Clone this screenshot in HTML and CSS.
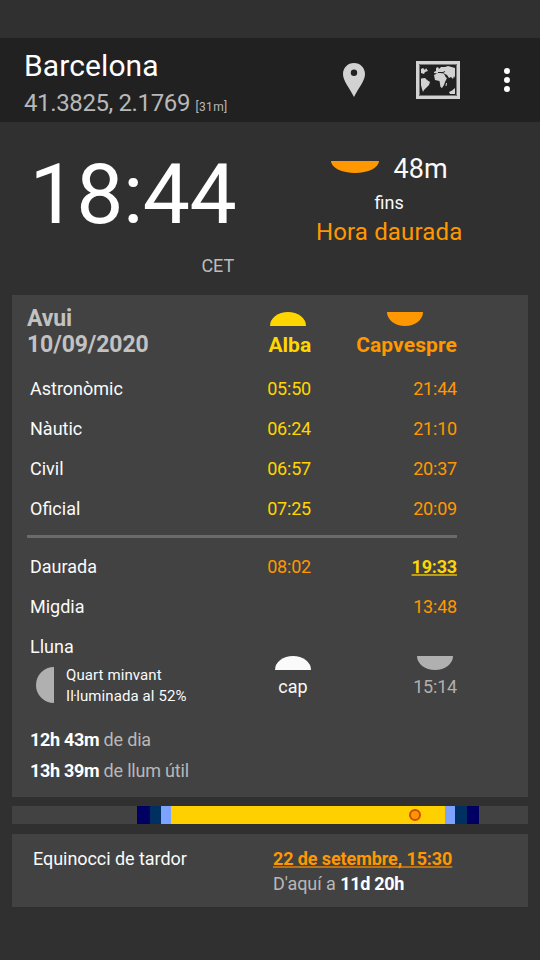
FILE: index.html
```html
<!DOCTYPE html>
<html lang="ca">
<head>
<meta charset="utf-8">
<title>Barcelona</title>
<link rel="stylesheet" href="styles.css">
</head>
<body>
<header class="bar">
  <div class="place">
    <div class="city">Barcelona</div>
    <div class="coords">41.3825, 2.1769 <small>[31m]</small></div>
  </div>
  <svg class="pin" width="22" height="34" viewBox="0 0 22 34"><path fill="#d2d2d2" fill-rule="evenodd" d="M11 0C4.800 0 0 4.800 0 11C0 18 6.500 25 11 34C15.500 25 22 18 22 11C22 4.800 17.200 0 11 0ZM11 6.500a3.200 3.200 0 1 1 0 6.400a3.200 3.200 0 1 1 0-6.400Z"/></svg>
  <svg class="map" width="44" height="38" viewBox="0 0 44 38">
    <path fill="#d2d2d2" fill-rule="evenodd" d="M0 0H44V38H0ZM3 3V35H41V3Z"/>
    <path fill="none" stroke="#777" stroke-width="1" d="M3.500 3.500H40.500V34.500H3.500Z"/>
    <path fill="#d2d2d2" d="M5 8L7 7L9 9L10 7L12 10L9 11L8 13L5 12ZM5 17.500L9 17L11 19L14 21L13 24L10 27L8 29L7 31L6 28L5 24ZM18 11L20 10L20 7L22 6L23 8L25 6L29 6L32 5L39 7V17L38 15L37 18L35 16L33 17L31 14L28 12.500L24 13L18 12ZM18 14L21 12.500L28 13L30 16.500L31 17L29 21L28 24L26 27L24.500 26L23.500 20L19 19ZM30 22L31 22L30.500 25L29.500 25ZM33 31L36 29.500L39 27V33H34Z"/>
    <path stroke="#212121" stroke-width="1" fill="none" d="M22 11.500H27L29 10.500"/>
  </svg>
  <svg class="more" width="6" height="24" viewBox="0 0 6 24" fill="#fff"><circle cx="3" cy="3" r="3"/><circle cx="3" cy="12" r="3"/><circle cx="3" cy="21" r="3"/></svg>
</header>

<section class="now">
  <div class="clock">
    <div class="time">18:44</div>
    <div class="zone">CET</div>
  </div>
  <div class="next">
    <div class="left"><i class="half set wide"></i><span>48m</span></div>
    <div class="until">fins</div>
    <div class="phase">Hora daurada</div>
  </div>
</section>

<main class="card day">
  <div class="head">
    <div class="date">Avui<br>10/09/2020</div>
    <div class="col alba"><i class="half rise"></i><b>Alba</b></div>
    <div class="col dusk"><i class="half set"></i><b>Capvespre</b></div>
  </div>
  <div class="row"><span>Astronòmic</span><span class="y">05:50</span><span class="o">21:44</span></div>
  <div class="row"><span>Nàutic</span><span class="y">06:24</span><span class="o">21:10</span></div>
  <div class="row"><span>Civil</span><span class="y">06:57</span><span class="o">20:37</span></div>
  <div class="row"><span>Oficial</span><span class="y">07:25</span><span class="o">20:09</span></div>
  <div class="rule"></div>
  <div class="row"><span>Daurada</span><span class="o">08:02</span><span class="y current">19:33</span></div>
  <div class="row"><span>Migdia</span><span></span><span class="o">13:48</span></div>
  <div class="moon">
    <div>
      <div class="moon-name">Lluna</div>
      <div class="moon-state"><i class="quarter"></i><div>Quart minvant<br>I<span class="gem">l·</span>luminada al 52%</div></div>
    </div>
    <div class="moon-time up"><i class="half rise"></i><span>cap</span></div>
    <div class="moon-time down"><i class="half set"></i><span>15:14</span></div>
  </div>
  <div class="totals">
    <div><b>12h 43m</b> de dia</div>
    <div><b>13h 39m</b> de llum útil</div>
  </div>
</main>

<div class="band">
  <i class="astro"></i><i class="naut"></i><i class="civil"></i><i class="sun"><i class="dot"></i></i><i class="civil"></i><i class="naut"></i><i class="astro"></i>
</div>

<section class="card event">
  <div class="event-name">Equinocci de tardor</div>
  <div class="event-when">
    <div class="when">22 de setembre, 15:30</div>
    <div class="ago">D'aquí a <b>11d 20h</b></div>
  </div>
</section>
</body>
</html>
```
FILE: styles.css
```css
* { box-sizing: border-box; }
body {
  margin: 0;
  padding-top: 38px;
  width: 540px;
  height: 960px;
  overflow: hidden;
  background: #303030;
  color: #fafafa;
  font: 18px/24px Roboto, sans-serif;
}
i { display: block; }
svg { display: block; flex: none; }

.bar { display: flex; height: 84px; background: #212121; }
.place { width: 319px; margin-left: 24px; padding-top: 9px; }
.city { font-size: 30px; line-height: 38px; color: #fff; letter-spacing: .1px; }
.coords { font-size: 24px; line-height: 36px; color: #b8b8b8; white-space: nowrap; letter-spacing: -.38px; }
.coords small { font-size: 12px; letter-spacing: .3px; }
.pin { margin-top: 25px; }
.map { margin: 23px 0 0 51px; }
.more { margin: 30px 0 0 44px; }

.now { display: flex; height: 173px; }
.clock { width: 235px; text-align: right; }
.time { margin-right: -3px; font-size: 84px; line-height: 100px; padding-top: 23px; color: #fff; letter-spacing: -.5px; }
.zone { margin: 9px -1px 0 0; color: #bdbdbd; }
.next { width: 309px; text-align: center; }
.left, .until, .phase { padding-left: 5px; }
.left { display: flex; justify-content: center; gap: 15px; height: 69px; padding-top: 31px; font-size: 27px; line-height: 32px; }
.until { line-height: 24px; }
.phase { font-size: 24px; line-height: 34px; color: #ff9800; letter-spacing: .15px; }

.half { width: 36px; height: 14px; background: currentColor; flex: none; }
.rise { border-radius: 50% 50% 0 0 / 100% 100% 0 0; }
.set { border-radius: 0 0 50% 50% / 0 0 100% 100%; }
.wide { width: 48px; height: 12px; margin-top: 8px; color: #ff9800; }

.card { margin: 0 12px; background: #424242; }
.day { height: 502px; padding: 10px 71px 0 15px; }
.head { display: flex; height: 64px; }
.date { flex: 1; padding-top: 1px; font-size: 23px; line-height: 26px; font-weight: 700; color: #c2c2c2; letter-spacing: -.1px; }
.col { display: flex; flex-direction: column; align-items: center; padding-top: 7px; font-size: 21px; }
.col b { margin-top: 7px; }
.col .half { margin-right: 4px; }
.alba { color: #ffd600; margin-right: 45px; }
.dusk { color: #ff9800; letter-spacing: .1px; }
.row { display: grid; grid-template-columns: 181px 103px 146px; height: 40px; line-height: 40px; }
.row span { text-align: right; }
.row span:first-child { text-align: left; padding-left: 3px; }
.row .y, .row .o, .down span { letter-spacing: -.2px; }
.y { color: #ffd600; }
.o { color: #ff9800; }
.current { font-weight: 700; text-decoration: underline; text-decoration-thickness: 2px; text-underline-offset: 1px; text-decoration-color: #b99f16; text-decoration-skip-ink: none; }
.rule { height: 3px; margin: 6px 0 9px; background: #6b6b6b; }
.moon { display: flex; height: 90px; }
.moon > :first-child { width: 248px; }
.moon-name { height: 38px; line-height: 40px; padding-left: 3px; }
.moon-state { display: flex; gap: 12px; padding-left: 9px; font-size: 15px; line-height: 21px; letter-spacing: .1px; }
.gem { letter-spacing: -.8px; }
.quarter { width: 18px; height: 36px; margin-top: 2px; border-radius: 18px 0 0 18px; background: #b0b0b0; }
.moon-time { padding-top: 29px; }
.moon-time span { display: block; margin-top: 5px; }
.up { width: 36px; text-align: center; }
.down { width: 146px; color: #b0b0b0; text-align: right; }
.down .half { margin-left: 106px; }
.totals { padding: 7px 0 0 3px; line-height: 31px; color: #b8b8b8; letter-spacing: -.2px; }
.totals b, .ago b { color: #fff; letter-spacing: -.3px; }

.band { display: flex; height: 18px; margin: 9px 12px 10px; padding-left: 125px; background: #424242; }
.astro { width: 13px; background: #000062; }
.naut { width: 11px; background: #002f62; }
.civil { width: 10px; background: #7ea2ff; }
.sun { width: 274px; padding: 3px 0 0 238px; background: #ffd000; }
.sun ~ .naut { width: 12px; }
.sun ~ .astro { width: 12px; }
.dot { width: 12px; height: 12px; border: 2px solid #d24a00; border-radius: 50%; background: #ff9800; }

.event { display: flex; height: 73px; padding: 12px 0 0 21px; line-height: 25px; }
.event-name { width: 240px; letter-spacing: -.05px; }
.when { font-weight: 700; color: #ff9800; letter-spacing: -.1px; text-decoration: underline; text-decoration-thickness: 2px; text-underline-offset: 1px; text-decoration-color: #b57118; text-decoration-skip-ink: none; }
.ago { color: #b8b8b8; letter-spacing: -.05px; }
```
